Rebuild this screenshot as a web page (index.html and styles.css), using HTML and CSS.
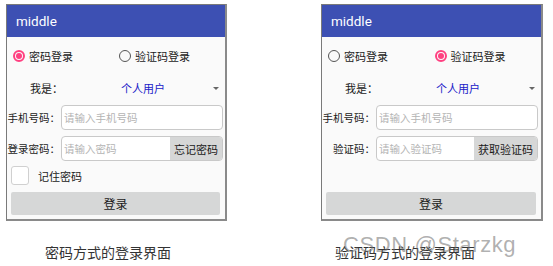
FILE: index.html
```html
<!DOCTYPE html>
<html lang="zh-CN">
<head>
    <meta charset="UTF-8">
    <title>登录界面</title>
    <link rel="stylesheet" href="styles.css">
</head>
<body>
    <div class="page">
        <div class="column">
            <div class="phone">
                <div class="appbar">middle</div>
                <div class="radios">
                    <label class="radio checked"><span class="dot"></span>密码登录</label>
                    <label class="radio second"><span class="dot"></span>验证码登录</label>
                </div>
                <div class="select-row">
                    <span class="who">我是：</span>
                    <span class="user-type">个人用户</span>
                    <span class="arrow"></span>
                </div>
                <div class="field">
                    <span class="field-label">手机号码：</span>
                    <div class="input"><span class="hint">请输入手机号码</span></div>
                </div>
                <div class="field">
                    <span class="field-label">登录密码：</span>
                    <div class="input"><span class="hint">请输入密码</span><span class="side-btn">忘记密码</span></div>
                </div>
                <div class="remember">
                    <span class="box"></span>
                    <span>记住密码</span>
                </div>
                <div class="login-btn">登录</div>
            </div>
            <p class="caption">密码方式的登录界面</p>
        </div>

        <div class="column right">
            <div class="phone wide">
                <div class="appbar">middle</div>
                <div class="radios">
                    <label class="radio"><span class="dot"></span>密码登录</label>
                    <label class="radio second checked"><span class="dot"></span>验证码登录</label>
                </div>
                <div class="select-row">
                    <span class="who">我是：</span>
                    <span class="user-type">个人用户</span>
                    <span class="arrow"></span>
                </div>
                <div class="field">
                    <span class="field-label">手机号码：</span>
                    <div class="input"><span class="hint">请输入手机号码</span></div>
                </div>
                <div class="field">
                    <span class="field-label">验证码：</span>
                    <div class="input"><span class="hint">请输入验证码</span><span class="side-btn code">获取验证码</span></div>
                </div>
                <div class="remember empty"></div>
                <div class="login-btn">登录</div>
            </div>
            <p class="caption">验证码方式的登录界面</p>
        </div>
    </div>
    <div class="watermark">CSDN @Starzkg</div>
</body>
</html>
```

FILE: styles.css
```css
* {
    margin: 0;
    padding: 0;
    box-sizing: border-box;
}

body {
    width: 553px;
    height: 266px;
    background: #fff;
    font-family: "Noto Sans CJK SC", "Noto Sans", sans-serif;
    font-size: 11px;
    color: #1a1a1a;
    position: relative;
    overflow: hidden;
}

.page {
    display: flex;
    padding: 4px 0 0 6px;
    gap: 94px;
}

.phone {
    width: 221px;
    height: 217px;
    border: 1px solid #7a7a7a;
    border-right: 2px solid #8a8a8a;
    border-bottom: 2px solid #8a8a8a;
    background: #fafafa;
    display: flex;
    flex-direction: column;
}

.phone.wide {
    width: 222px;
}

.appbar {
    height: 32px;
    background: #3d50b3;
    color: #fff;
    font-family: Roboto, "Noto Sans", sans-serif;
    font-size: 13.5px;
    line-height: 32px;
    padding-left: 9px;
}

/* radio row */
.radios {
    height: 38px;
    display: flex;
    align-items: center;
    padding-left: 6px;
}

.radio {
    display: flex;
    align-items: center;
    gap: 4px;
    width: 114px;
}

.radio .dot {
    width: 12px;
    height: 12px;
    border: 1.5px solid #555;
    border-radius: 50%;
    display: flex;
    align-items: center;
    justify-content: center;
}

.radio.checked .dot {
    border: 2px solid #ff4081;
}

.radio.checked .dot::after {
    content: "";
    width: 6px;
    height: 6px;
    border-radius: 50%;
    background: #ff4081;
}

/* spinner row */
.select-row {
    height: 25px;
    display: flex;
    align-items: center;
    padding-left: 23px;
    position: relative;
}

.user-type {
    color: #2020c8;
    margin-left: 58px;
}

.arrow {
    position: absolute;
    right: 6px;
    top: 12px;
    border-left: 3px solid transparent;
    border-right: 3px solid transparent;
    border-top: 3px solid #666;
}

/* form fields */
.field {
    height: 25px;
    display: flex;
    align-items: center;
    margin-top: 5px;
}

.field + .field {
    margin-top: 6px;
}

.field-label {
    width: 53px;
    text-align: right;
    flex: none;
    white-space: nowrap;
    font-size: 10.5px;
}

.input {
    width: 162px;
    height: 25px;
    margin-left: 1px;
    background: #fff;
    border: 1px solid #c9c9c9;
    border-radius: 4px;
    display: flex;
    align-items: center;
    justify-content: space-between;
    overflow: hidden;
}

.hint {
    color: #b4b4b4;
    font-size: 10.5px;
    padding-left: 2px;
    white-space: nowrap;
}

.side-btn {
    height: 100%;
    width: 52px;
    background: #d6d7d7;
    display: flex;
    align-items: center;
    justify-content: center;
    white-space: nowrap;
}

.side-btn.code {
    width: 63px;
}

.remember {
    height: 19px;
    margin-top: 5px;
    display: flex;
    align-items: center;
    gap: 9px;
    padding-left: 4px;
}

.remember .box {
    width: 18px;
    height: 19px;
    background: #fff;
    border: 1px solid #d0d0d0;
    border-radius: 3px;
}

.login-btn {
    margin: 7px 5px 0 4px;
    height: 23px;
    background: #d6d7d7;
    border-radius: 2px;
    display: flex;
    align-items: center;
    justify-content: center;
    font-size: 12px;
}

.caption {
    margin-top: 21px;
    padding-left: 39px;
    font-size: 14px;
    color: #333;
}

.right .caption {
    padding-left: 14px;
}

.watermark {
    position: absolute;
    left: 343px;
    top: 232px;
    font-family: "Liberation Sans", Arial, sans-serif;
    font-size: 22px;
    letter-spacing: 0.6px;
    color: rgba(110, 110, 110, 0.55);
    white-space: nowrap;
}
```
